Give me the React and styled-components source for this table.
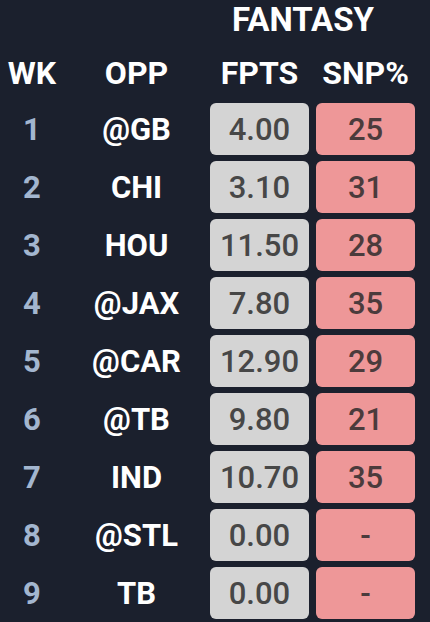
import React from "react";
import styled, { createGlobalStyle } from "styled-components";

const Global = createGlobalStyle`
  html, body { margin: 0; padding: 0; background: #1b202d; }
  body { font-family: Roboto, "Noto Sans", sans-serif; }
`;

const Page = styled.div`
  width: 430px;
  height: 622px;
  background: #1b202d;
  overflow: hidden;
`;

const Grid = styled.div`
  display: grid;
  grid-template-columns: 62px 133px 99px 99px;
  column-gap: 7px;
  padding-left: 1px;
`;

const Title = styled.div`
  grid-column: 3 / span 2;
  line-height: normal;
  text-align: center;
  padding-right: 19px;
  color: #ffffff;
  font-weight: 700;
  font-size: 33px;
`;

const HeadCell = styled.div`
  height: 55px;
  margin-top: 6.8px;
  margin-bottom: 2.5px;
  display: flex;
  align-items: center;
  justify-content: center;
  color: #ffffff;
  font-weight: 700;
  font-size: 32px;
  white-space: nowrap;
`;

const Wk = styled.div`
  height: 52px;
  margin-bottom: 6px;
  display: flex;
  align-items: center;
  justify-content: center;
  color: #a3b6cf;
  font-weight: 700;
  font-size: 31px;
`;

const Opp = styled(Wk)`
  color: #ffffff;
`;

const Stat = styled.div`
  height: 52px;
  margin-bottom: 6px;
  border-radius: 6px;
  display: flex;
  align-items: center;
  justify-content: center;
  background: ${(p) => (p.$tone === "red" ? "#ee9798" : "#d4d4d4")};
  color: ${(p) => (p.$tone === "red" ? "#4b3b3c" : "#474747")};
  font-weight: 500;
  font-size: 31px;
`;

const rows = [
  [1, "@GB", "4.00", "25"],
  [2, "CHI", "3.10", "31"],
  [3, "HOU", "11.50", "28"],
  [4, "@JAX", "7.80", "35"],
  [5, "@CAR", "12.90", "29"],
  [6, "@TB", "9.80", "21"],
  [7, "IND", "10.70", "35"],
  [8, "@STL", "0.00", "-"],
  [9, "TB", "0.00", "-"],
];

export default function App() {
  return (
    <Page>
      <Global />
      <Grid>
        <Title>FANTASY</Title>
        <HeadCell>WK</HeadCell>
        <HeadCell>OPP</HeadCell>
        <HeadCell>FPTS</HeadCell>
        <HeadCell>SNP%</HeadCell>
        {rows.map(([wk, opp, fpts, snp]) => (
          <React.Fragment key={wk}>
            <Wk>{wk}</Wk>
            <Opp>{opp}</Opp>
            <Stat>{fpts}</Stat>
            <Stat $tone="red">{snp}</Stat>
          </React.Fragment>
        ))}
      </Grid>
    </Page>
  );
}
